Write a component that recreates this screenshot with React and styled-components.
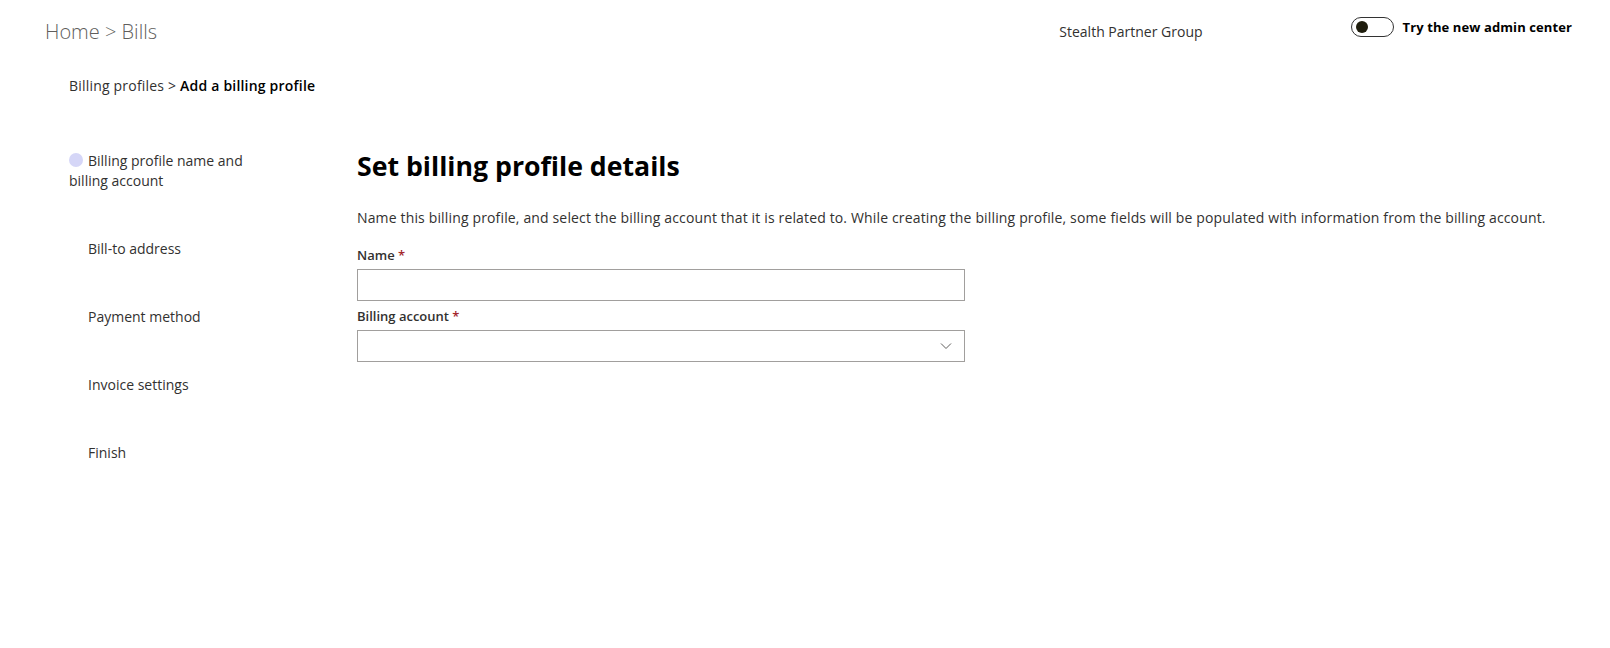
import React from "react";
import styled, { createGlobalStyle } from "styled-components";

const Global = createGlobalStyle`
  html, body { margin: 0; padding: 0; background: #fff; }
  body { font-family: "Open Sans", "Noto Sans", sans-serif; color: #323130; }
  * { box-sizing: border-box; }
`;

const Page = styled.div`
  width: 1610px;
  height: 648px;
  display: flex;
  flex-direction: column;
`;

const TopBar = styled.header`
  display: flex;
  align-items: flex-start;
  padding: 17px 38px 0 45px;
  height: 60px;
`;

const HomeCrumb = styled.div`
  font-size: 20px;
  font-weight: 300;
  color: #605e5c;
  line-height: 30px;
  flex: 1;
`;

const Tenant = styled.div`
  font-size: 14px;
  color: #323130;
  line-height: 30px;
  margin-right: 148px;
`;

const ToggleWrap = styled.label`
  display: flex;
  align-items: center;
  gap: 9px;
  font-size: 13px;
  font-weight: 700;
  letter-spacing: 0.1px;
  color: #000;
  height: 20px;
`;

const Track = styled.span`
  width: 43px;
  height: 20px;
  border: 1px solid #333;
  border-radius: 10px;
  display: flex;
  align-items: center;
  padding-left: 4px;
`;

const Knob = styled.span`
  width: 12px;
  height: 12px;
  border-radius: 50%;
  background: #1f1d0d;
`;

const SubCrumb = styled.div`
  padding-left: 69px;
  font-size: 14px;
  line-height: 20px;
  letter-spacing: 0.2px;
  color: #323130;
  margin-top: 16px;
  b { font-weight: 600; color: #000; }
`;

const Body = styled.div`
  display: flex;
  padding-top: 51px;
`;

const Steps = styled.nav`
  width: 357px;
  flex-shrink: 0;
  padding-left: 69px;
  padding-top: 4px;
  display: flex;
  flex-direction: column;
  gap: 48px;
`;

const Step = styled.div`
  font-size: 14px;
  line-height: 20px;
  color: #323130;
  padding-left: ${(p) => (p.$active ? "0" : "19px")};
  width: 200px;
`;

const Dot = styled.span`
  display: inline-block;
  width: 14px;
  height: 14px;
  border-radius: 50%;
  background: #d5d6f7;
  vertical-align: -1px;
  margin-right: 5px;
`;

const Main = styled.main`
  display: flex;
  flex-direction: column;
  padding-top: 1px;
`;

const Title = styled.h1`
  margin: 0;
  font-size: 26.7px;
  font-weight: 700;
  color: #000;
  line-height: 36px;
`;

const Desc = styled.p`
  margin: 24px 0 0;
  font-size: 14px;
  line-height: 20px;
  letter-spacing: 0.15px;
  color: #323130;
`;

const Field = styled.div`
  display: flex;
  flex-direction: column;
  width: 608px;
  margin-top: ${(p) => p.$mt || "5px"};
`;

const Label = styled.label`
  font-size: 13px;
  font-weight: 600;
  color: #323130;
  line-height: 20px;
  padding-bottom: 4px;
  span { color: #a4262c; }
`;

const Input = styled.input`
  height: 32px;
  border: 1px solid #a19f9d;
  border-radius: 0;
  outline: none;
  font: inherit;
  padding: 0 8px;
`;

const Select = styled.div`
  height: 32px;
  border: 1px solid #a19f9d;
  display: flex;
  align-items: center;
  justify-content: flex-end;
  padding-right: 12px;
  color: #605e5c;
`;

export default function App() {
  return (
    <Page>
      <Global />
      <TopBar>
        <HomeCrumb>Home &gt; Bills</HomeCrumb>
        <Tenant>Stealth Partner Group</Tenant>
        <ToggleWrap>
          <Track><Knob /></Track>
          Try the new admin center
        </ToggleWrap>
      </TopBar>
      <SubCrumb>
        Billing profiles &gt; <b>Add a billing profile</b>
      </SubCrumb>
      <Body>
        <Steps>
          <Step $active>
            <Dot />
            Billing profile name and billing account
          </Step>
          <Step>Bill-to address</Step>
          <Step>Payment method</Step>
          <Step>Invoice settings</Step>
          <Step>Finish</Step>
        </Steps>
        <Main>
          <Title>Set billing profile details</Title>
          <Desc>
            Name this billing profile, and select the billing account that it is related to. While creating the billing profile, some fields will be populated with information from the billing account.
          </Desc>
          <Field $mt="17px">
            <Label>Name <span>*</span></Label>
            <Input />
          </Field>
          <Field $mt="5px">
            <Label>Billing account <span>*</span></Label>
            <Select>
              <svg width="12" height="8" viewBox="0 0 12 8" fill="none">
                <path d="M1 1.5l5 5 5-5" stroke="#605e5c" strokeWidth="1" />
              </svg>
            </Select>
          </Field>
        </Main>
      </Body>
    </Page>
  );
}
